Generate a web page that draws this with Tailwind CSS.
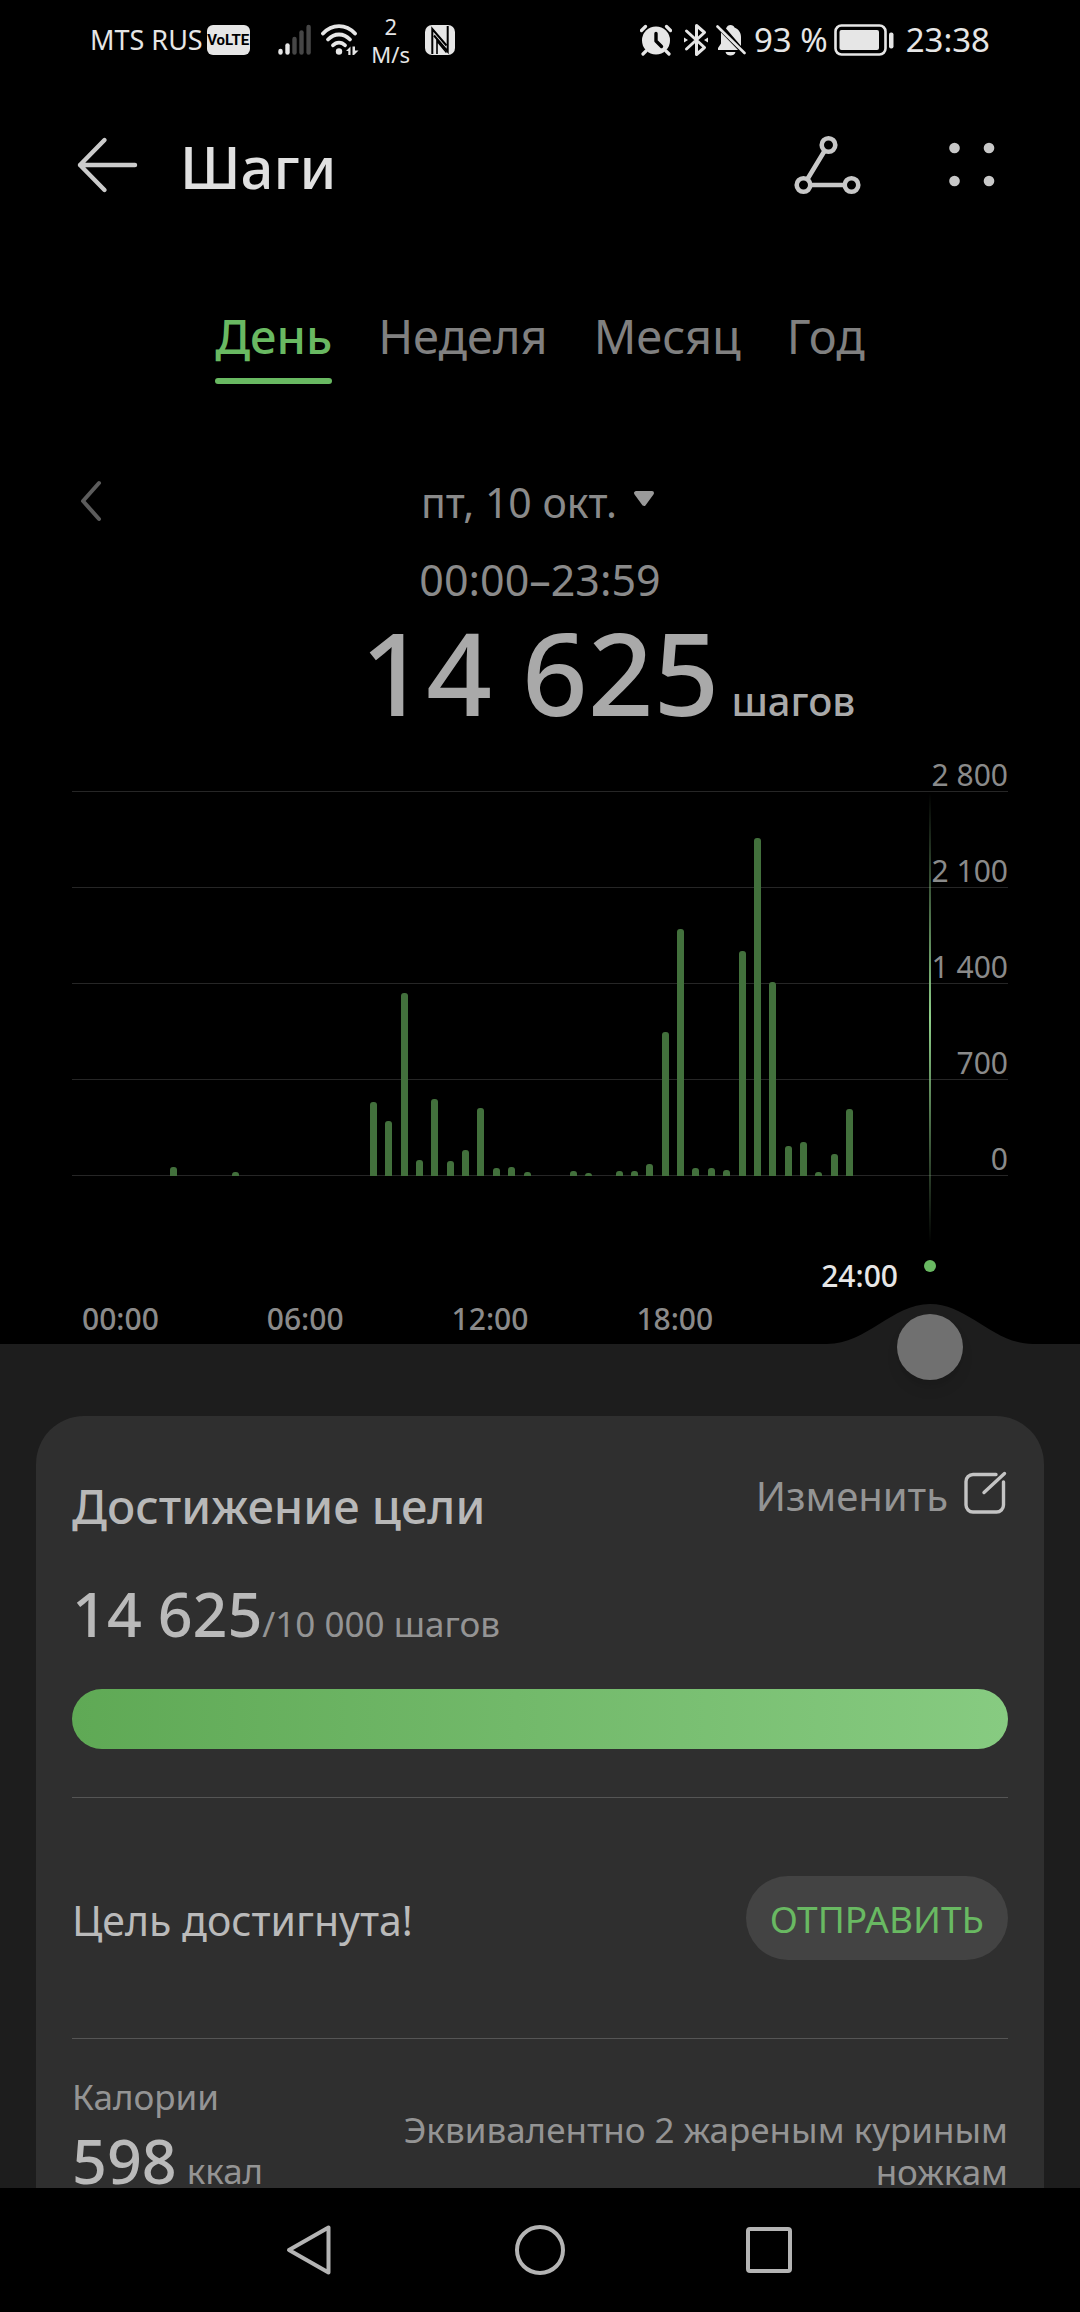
<!DOCTYPE html>
<html lang="ru">
<head>
  <meta charset="UTF-8">
  <meta name="viewport" content="width=device-width, initial-scale=1.0">
  <title>Шаги</title>
  <script src="https://cdn.jsdelivr.net/npm/@tailwindcss/browser@4"></script>
</head>
<body class="h-screen flex flex-col overflow-hidden bg-black font-['Noto_Sans',sans-serif] text-[#8a8a8a]">

  <!-- status bar -->
  <div class="h-20 shrink-0 flex items-center justify-between px-[90px] text-[#e6e6e6]">
    <div class="flex items-center">
      <span class="text-[27px] leading-8">MTS RUS</span>
      <span class="ml-1 flex h-[30px] w-[43px] items-center justify-center rounded-md bg-[#e6e6e6] font-['Roboto'] text-[15px] font-bold text-black">VoLTE</span>
      <svg class="ml-7 h-8 w-[33px]" viewBox="0 0 33 32" stroke-width="4.4" stroke-linecap="round">
        <g stroke="#e6e6e6"><path d="M2.5 28.5v-1.5"/><path d="M9.5 28.5v-7"/></g>
        <g stroke="#464646"><path d="M16.5 28.5v-13.5"/><path d="M23.5 28.5v-20"/><path d="M30.6 28.5v-25.500"/></g>
      </svg>
      <svg class="ml-2.5 h-8 w-[38px]" viewBox="0 0 38 32" fill="none" stroke="#e6e6e6" stroke-width="3.8" stroke-linecap="round">
        <path d="M2 9.500C11-.4 25-.4 34 9.500"/>
        <path d="M7 15.500C13.500 8.800 22.500 8.800 29 15.500"/>
        <path d="M12 21.300C15.500 17.600 20.500 17.600 24 21.300"/>
        <circle cx="18" cy="27.500" r="3.200" fill="#e6e6e6" stroke="none"/>
        <path d="M25 27l4.500-4.500v8.500h-2.200v-4zM31.500 22.500v8.500h1.500l4.500-4.500h-3.500v-4z" fill="#e6e6e6" stroke="none"/>
      </svg>
      <span class="ml-3 flex w-10 flex-col items-center text-[22px] leading-7"><span>2</span><span>M/s</span></span>
      <svg class="ml-3.5 h-8 w-[30px]" viewBox="0 0 30 32">
        <rect y="1" width="30" height="30" rx="7" fill="#e6e6e6"/>
        <path d="M7.300 30V5L21.500 21.500" fill="none" stroke="#000" stroke-width="2"/>
        <path d="M22.700 2v25.500L9 11.500" fill="none" stroke="#000" stroke-width="2"/>
        <path d="M12 30V17l9.500 11.500" fill="none" stroke="#000" stroke-width="1.600"/>
      </svg>
    </div>
    <div class="flex items-center text-[33px] leading-10">
      <svg class="h-8 w-8" viewBox="0 0 32 32">
        <circle cx="16" cy="16.500" r="14" fill="#e6e6e6"/>
        <path d="M16 9.500v7.500l5.500 5.500" fill="none" stroke="#000" stroke-width="3.400" stroke-linecap="round" stroke-linejoin="round"/>
        <path d="M1.500 6.500l4-4M30.500 6.500l-4-4M6 27l-3 3M26 27l3 3" stroke="#e6e6e6" stroke-width="3.200" stroke-linecap="round"/>
      </svg>
      <svg class="ml-3 h-[34px] w-6" viewBox="0 0 24 34" fill="none" stroke="#e6e6e6" stroke-width="3" stroke-linejoin="round" stroke-linecap="round">
        <path d="M2.500 8L20.500 24.500 12.500 31.500V2.500L20.500 9.500 2.500 26"/>
        <path d="M0 14.500l4 2.500-4 2.500zM24 14.500l-4 2.500 4 2.500z" fill="#e6e6e6" stroke="none"/>
      </svg>
      <svg class="ml-2 h-8 w-[30px]" viewBox="0 0 30 32">
        <path d="M10 4.500C11 2 12.500 1 14.500 1s3.500 1 4 2.500c4 1.500 6.500 5 6.500 9.500v9zM5 8.500L22 26H2v-2l3-4.500zM9.500 28h10c-.8 2.600-2.500 3.500-5 3.500s-4.200-.9-5-3.500z" fill="#e6e6e6"/>
        <path d="M1.500 2.500l27 26.500" stroke="#e6e6e6" stroke-width="2.600" stroke-linecap="round"/>
      </svg>
      <span class="ml-2">93 %</span>
      <svg class="ml-1.5 h-8 w-[60px]" viewBox="0 0 60 32">
        <rect x="1.500" y="1.500" width="50" height="29" rx="6" fill="none" stroke="#e6e6e6" stroke-width="2.600"/>
        <rect x="5.500" y="6" width="39.500" height="20" rx="2" fill="#e6e6e6"/>
        <rect x="55" y="8.500" width="4.500" height="16" rx="2" fill="#e6e6e6"/>
      </svg>
      <time class="ml-3">23:38</time>
    </div>
  </div>

  <!-- title bar -->
  <header class="h-[172px] shrink-0 flex items-center pl-[76px] pr-[84px]">
    <button type="button" aria-label="Назад">
      <svg class="h-16 w-16" viewBox="0 0 64 64" fill="none" stroke="#cbcbcb" stroke-width="4.400" stroke-linecap="round" stroke-linejoin="round">
        <path d="M59 31H4M28.500 6L4 31l24.500 25"/>
      </svg>
    </button>
    <h1 class="ml-10 flex-1 pt-0.5 text-[58px] leading-[72px] font-medium text-[#e0e0e0]">Шаги</h1>
    <button type="button" aria-label="Маршрут">
      <svg class="h-16 w-[68px]" viewBox="0 0 68 64" fill="none" stroke="#c8c8c8" stroke-width="4.600">
        <circle cx="34.500" cy="11" r="6.800"/><circle cx="9.500" cy="51" r="6.800"/><circle cx="57.500" cy="51" r="6.800"/>
        <path d="M30.500 17L13.500 45M16.500 51h34"/>
      </svg>
    </button>
    <button type="button" aria-label="Меню" class="ml-[86px]">
      <svg class="h-16 w-12" viewBox="0 0 48 64" fill="#c8c8c8">
        <circle cx="6.500" cy="14" r="5.300"/><circle cx="41" cy="14" r="5.300"/><circle cx="6.500" cy="47" r="5.300"/><circle cx="41" cy="47" r="5.300"/>
      </svg>
    </button>
  </header>

  <!-- period tabs -->
  <nav class="shrink-0 flex items-start justify-center gap-[46px] pt-14 text-[47px] leading-14 text-[#808080]">
    <a href="#day" class="flex flex-col gap-3.5 font-medium text-[#69b962]">День<span class="h-1.5 rounded-full bg-[#69b962]"></span></a>
    <a href="#week">Неделя</a>
    <a href="#month">Месяц</a>
    <a href="#year">Год</a>
  </nav>

  <section class="shrink-0">
    <div class="mt-[90px] grid grid-cols-[1fr_auto_1fr] items-center px-[76px] text-[41px] leading-14">
      <button type="button" aria-label="Предыдущий день" class="justify-self-start">
        <svg class="h-12 w-8" viewBox="0 0 32 48" fill="none" stroke="#5c5c5c" stroke-width="4" stroke-linecap="round" stroke-linejoin="round"><path d="M23 5L7 23l16 18"/></svg>
      </button>
      <button type="button" class="flex items-center gap-3.5">пт, 10 окт.
        <svg class="h-7 w-7" viewBox="0 0 28 28" fill="#9a9a9a" stroke="#9a9a9a" stroke-width="4" stroke-linejoin="round"><path d="M5 5h16l-8 11z"/></svg>
      </button>
    </div>
    <p class="mt-[22px] text-center text-[43px] leading-14">00:00–23:59</p>
    <p class="mt-2 grid grid-cols-[1fr_auto_1fr] items-baseline gap-3 font-medium text-[#a9a9a9]">
      <span class="col-start-2 text-[115px] leading-28">14 625</span>
      <span class="text-[40px] leading-14">шагов</span>
    </p>

    <!-- chart -->
    <div class="relative mx-[72px] text-[30px] leading-8">
      <div class="flex h-[63px] items-end justify-end border-b border-[#262626]">2 800</div>
      <div class="flex h-24 items-end justify-end border-b border-[#262626]">2 100</div>
      <div class="flex h-24 items-end justify-end border-b border-[#262626]">1 400</div>
      <div class="flex h-24 items-end justify-end border-b border-[#262626]">700</div>
      <div class="flex h-24 items-end justify-end border-b border-[#262626]">0</div>
      <div id="bars" class="absolute bottom-0 left-12 right-[151px] flex h-96 items-end"></div>
      <div class="absolute top-16 right-[77px] h-[450px] w-0.5 bg-linear-to-b from-transparent via-[#8fd08a] to-transparent"></div>
      <div class="absolute top-[531px] right-[72px] size-3 rounded-full bg-[#69b962]"></div>
    </div>
    <div class="flex h-[168px] items-end justify-between pt-[82px] pb-[7px] pl-[82px] pr-[182px] text-[30px] leading-9 font-medium">
      <span>00:00</span><span>06:00</span><span>12:00</span><span>18:00</span>
      <span class="self-start text-[#e6e6e6]">24:00</span>
    </div>
  </section>

  <main class="relative min-h-0 flex-1 bg-[#1d1d1d] px-9 pt-[72px]">
    <svg class="absolute -top-10 right-[47px] h-[41px] w-[206px]" viewBox="0 0 206 41" fill="#1d1d1d"><path d="M0 40C40 40 65 0 103 0s63 40 103 40v1H0z"/></svg>
    <input type="range" min="0" max="48" value="48" aria-label="Время" class="absolute -top-[30px] left-[87px] right-[117px] h-[66px] appearance-none bg-transparent [&::-webkit-slider-thumb]:size-[66px] [&::-webkit-slider-thumb]:appearance-none [&::-webkit-slider-thumb]:rounded-full [&::-webkit-slider-thumb]:bg-[#707070] [&::-webkit-slider-thumb]:shadow-lg">

    <div class="h-full overflow-hidden rounded-t-[48px] bg-[#2f2f2f] px-9 pt-[52px]">
      <div class="flex items-start justify-between">
        <h2 class="mt-2 text-[47px] leading-[60px] font-medium text-[#b8b8b8]">Достижение цели</h2>
        <button type="button" class="flex items-center gap-4 text-[40px] leading-14 text-[#949494]">Изменить
          <svg class="h-14 w-11" viewBox="0 0 44 56" fill="none" stroke="#c4c4c4" stroke-width="3.400" stroke-linecap="round" stroke-linejoin="round">
            <path d="M32 6.500H9A7 7 0 0 0 2 13.500V37a7 7 0 0 0 7 7H32.500a7 7 0 0 0 7-7V14"/><path d="M20 24.500L40.500 5.500"/>
          </svg>
        </button>
      </div>

      <p class="mt-[42px] flex items-baseline text-[35px] leading-12 text-[#949494]"><span class="text-[61px] leading-[72px] font-medium text-[#bababa]">14 625</span>/10 000 шагов</p>
      <div class="mt-[39px] h-[60px] rounded-full bg-linear-to-r from-[#5fa955] to-[#87cb81]"></div>

      <div class="mt-12 flex items-center justify-between border-y border-[#555555] py-[78px]">
        <p class="pt-1 text-[41px] leading-14 text-[#bababa]">Цель достигнута!</p>
        <button type="button" class="h-[84px] rounded-full bg-[#434343] px-6 pt-0.5 text-[37px] leading-12 text-[#69b962]">ОТПРАВИТЬ</button>
      </div>

      <div class="flex justify-between pt-[34px] text-[35px] text-[#949494]">
        <div>
          <h3 class="leading-12">Калории</h3>
          <p class="mt-1 flex items-baseline gap-2.5 leading-12"><span class="text-[61px] leading-[72px] font-medium text-[#bababa]">598</span>ккал</p>
        </div>
        <p class="mt-9 w-2/3 text-right leading-[42px]">Эквивалентно 2 жареным куриным ножкам</p>
      </div>
    </div>
  </main>

  <!-- system navigation -->
  <footer class="flex h-[124px] shrink-0 items-center justify-center gap-[178px]">
    <button type="button" aria-label="Назад"><svg class="size-13" viewBox="0 0 52 52" fill="none" stroke="#b4b4b4" stroke-width="4" stroke-linejoin="round"><path d="M44.500 3.500v45L5 26z"/></svg></button>
    <button type="button" aria-label="Домой"><svg class="size-13" viewBox="0 0 52 52" fill="none" stroke="#b4b4b4" stroke-width="4"><circle cx="26" cy="26" r="23"/></svg></button>
    <button type="button" aria-label="Недавние"><svg class="size-13" viewBox="0 0 52 52" fill="none" stroke="#b4b4b4" stroke-width="4"><rect x="4" y="5" width="42" height="42" rx="2"/></svg></button>
  </footer>

  <script>
    // steps per half hour
    const steps = [
      0, 0, 0, 65, 0, 0, 0, 28, 0, 0, 0, 0, 0, 0, 0, 0,
      538, 400, 1334, 116, 560, 113, 193, 495, 58, 69, 28, 0, 0, 40, 25, 0,
      33, 36, 91, 1047, 1800, 62, 55, 44, 1643, 2465, 1418, 218, 251, 28, 160, 487
    ];
    const bars = document.getElementById('bars');
    steps.forEach(value => {
      const slot = document.createElement('div');
      slot.className = 'flex h-full flex-1 items-end justify-center';
      slot.innerHTML = `<div class="w-[7px] rounded-t-[3px] bg-[#42703c]" style="height: ${value / 28}%"></div>`;
      bars.appendChild(slot);
    });
  </script>
</body>
</html>
